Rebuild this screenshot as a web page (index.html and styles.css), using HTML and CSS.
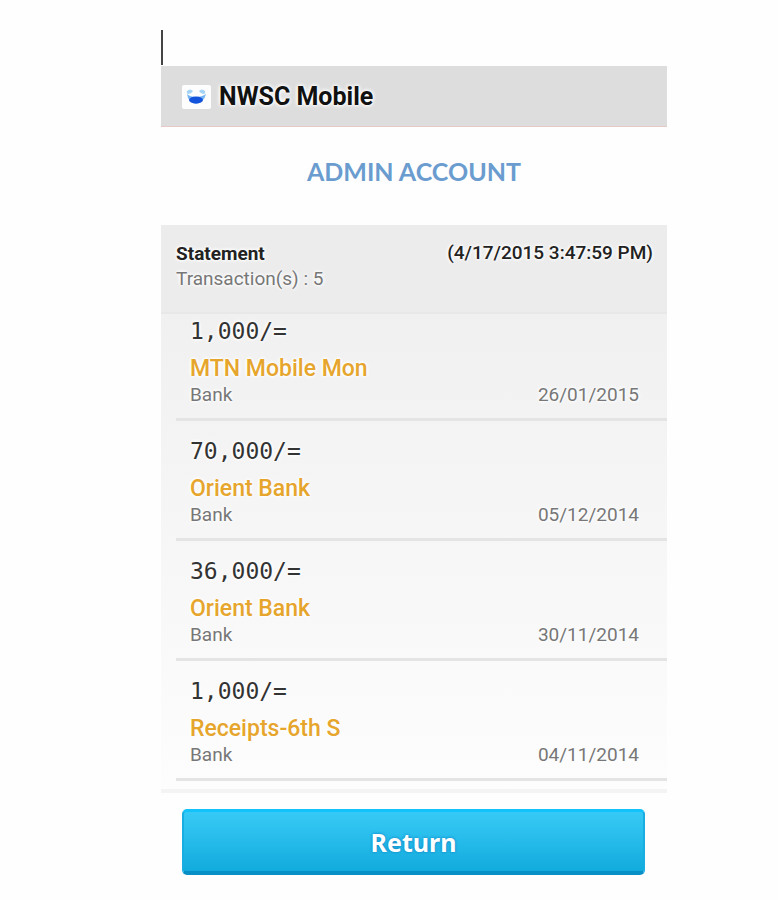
FILE: index.html
```html
<!DOCTYPE html>
<html lang="en">
<head>
    <meta charset="UTF-8">
    <meta name="viewport" content="width=device-width, initial-scale=1.0">
    <title>NWSC Mobile</title>
    <link rel="stylesheet" href="styles.css">
</head>
<body>
<div class="caret"></div>
<header class="app-bar">
    <svg class="app-icon" width="29" height="24" viewBox="0 0 29 24">
        <rect width="29" height="24" rx="2" fill="#fdfdfd"/>
        <path d="M5 6 Q8 3 11 6 Q10 8 7 9 Q4 9 5 6Z" fill="#a4d3f5"/>
        <path d="M23 6 Q20 3 17 6 Q18 8 21 9 Q24 9 23 6Z" fill="#a4d3f5"/>
        <path d="M5 9 Q6 17 14 19 Q22 17 24 9 Q20 12 14 12 Q8 12 5 9Z" fill="#75b4f4"/>
        <ellipse cx="14" cy="15" rx="7" ry="3.5" fill="#1454dc"/>
    </svg>
    <span class="app-name">NWSC Mobile</span>
</header>

<h1>ADMIN ACCOUNT</h1>

<main class="statement">
    <div class="statement-head">
        <div>
            <h2>Statement</h2>
            <p class="count">Transaction(s) : 5</p>
        </div>
        <span class="timestamp">(4/17/2015 3:47:59 PM)</span>
    </div>
    <ul class="transactions">
        <li class="transaction">
            <div class="amount">1,000/=</div>
            <div class="payee">MTN Mobile Mon</div>
            <div class="details"><span>Bank</span><span class="date">26/01/2015</span></div>
        </li>
        <li class="transaction">
            <div class="amount">70,000/=</div>
            <div class="payee">Orient Bank</div>
            <div class="details"><span>Bank</span><span class="date">05/12/2014</span></div>
        </li>
        <li class="transaction">
            <div class="amount">36,000/=</div>
            <div class="payee">Orient Bank</div>
            <div class="details"><span>Bank</span><span class="date">30/11/2014</span></div>
        </li>
        <li class="transaction">
            <div class="amount">1,000/=</div>
            <div class="payee">Receipts-6th S</div>
            <div class="details"><span>Bank</span><span class="date">04/11/2014</span></div>
        </li>
    </ul>
</main>

<button class="return-button" type="button">Return</button>
</body>
</html>
```
FILE: styles.css
```css
* {
    box-sizing: border-box;
}

body {
    background-color: #FEFEFE;
    color: #222222;
    font-family: Roboto, Arial, sans-serif;
    margin: 0;
    padding: 30px 111px 24px 161px;
}

h1, h2, p, ul {
    margin: 0;
    padding: 0;
}

.caret {
    width: 2px;
    height: 35px;
    margin-bottom: 1px;
    background-color: #444444;
}

.app-bar {
    display: flex;
    align-items: center;
    gap: 8px;
    height: 61px;
    padding: 2px 20px 0 21px;
    background-color: #DDDDDD;
    border-bottom: 1px solid #E6C8C4;
}

.app-name {
    color: #111111;
    font-size: 25px;
    font-weight: 700;
    line-height: 32px;
    text-shadow: 0 0 3px #FFFFFF, 0 0 4px #FFFFFF, 0 0 5px #FFFFFF;
}

h1 {
    color: #6A9CCF;
    font-family: Lato, Carlito, sans-serif;
    font-size: 25px;
    font-weight: 700;
    line-height: 32px;
    padding: 28px 0 38px;
    text-align: center;
}

.statement {
    background: linear-gradient(#EEEEEE, #FDFDFD);
    border-bottom: 4px solid #F4F4F4;
    padding-bottom: 8px;
    text-shadow: 0 0 3px #FFFFFF, 0 0 4px #FFFFFF, 0 0 4px #FFFFFF;
}

.statement-head {
    display: flex;
    justify-content: space-between;
    height: 89px;
    padding: 16px 14px 0 15px;
    background-color: #ECECEC;
    border-bottom: 2px solid #E8E8E8;
}

h2 {
    font-size: 19px;
    font-weight: 700;
    line-height: 26px;
}

.count {
    color: #777777;
    font-size: 19px;
    line-height: 24px;
}

.timestamp {
    font-size: 19px;
    font-weight: 500;
    line-height: 24px;
}

.transactions {
    list-style: none;
    margin-left: 15px;
}

.transaction {
    padding: 14px 28px 11px 14px;
    border-bottom: 3px solid #E4E4E4;
}

.transaction:first-child {
    padding-top: 1px;
}

.amount {
    color: #333333;
    font-family: "DejaVu Sans Mono", monospace;
    font-size: 23px;
    line-height: 32px;
    margin-bottom: 8px;
}

.payee {
    color: #E6A52C;
    font-size: 23px;
    font-weight: 500;
    line-height: 28px;
}

.details {
    display: flex;
    justify-content: space-between;
    color: #777777;
    font-size: 19px;
    line-height: 24px;
}

.return-button {
    display: block;
    width: calc(100% - 43px);
    height: 66px;
    margin: 16px 22px 0 21px;
    background: linear-gradient(#38CAF6, #12ABDD);
    border: 2px solid #18AEE2;
    border-top: 3px solid #12C2FA;
    border-bottom: 4px solid #078FC6;
    border-radius: 5px;
    color: #FFFFFF;
    font-family: "Noto Sans", sans-serif;
    font-size: 25px;
    font-weight: 700;
    text-shadow: 0 0 3px #0A78BE;
    cursor: pointer;
}
```
